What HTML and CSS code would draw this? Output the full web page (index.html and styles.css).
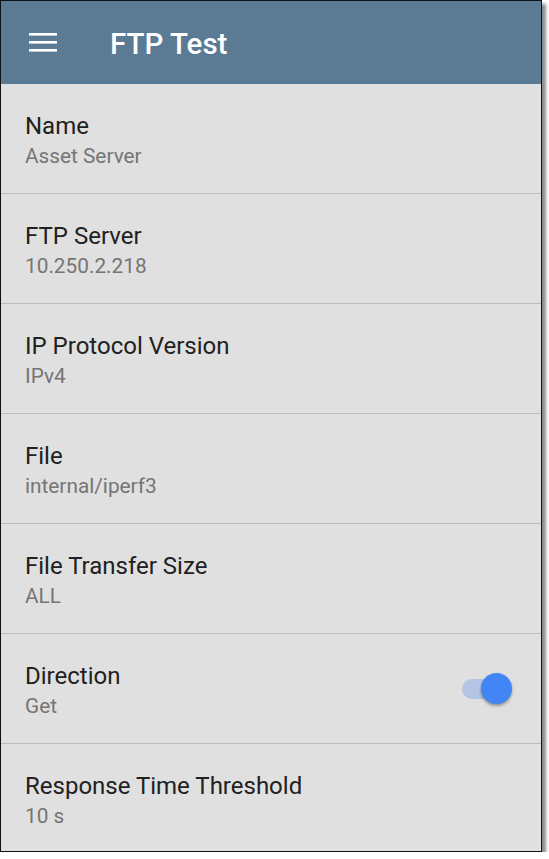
FILE: index.html
```html
<!DOCTYPE html>
<html lang="en">
<head>
    <meta charset="UTF-8">
    <title>FTP Test</title>
    <link rel="stylesheet" href="styles.css">
</head>
<body>
    <div class="screen">
        <div class="toolbar">
            <svg class="menu" width="28" height="19" viewBox="0 0 28 19">
                <rect x="0" y="0" width="28" height="2.6" fill="#fff"/>
                <rect x="0" y="8" width="28" height="2.6" fill="#fff"/>
                <rect x="0" y="16" width="28" height="2.6" fill="#fff"/>
            </svg>
            <h1>FTP Test</h1>
        </div>

        <div class="row">
            <div class="text">
                <div class="title">Name</div>
                <div class="value">Asset Server</div>
            </div>
        </div>
        <div class="row">
            <div class="text">
                <div class="title">FTP Server</div>
                <div class="value">10.250.2.218</div>
            </div>
        </div>
        <div class="row">
            <div class="text">
                <div class="title">IP Protocol Version</div>
                <div class="value">IPv4</div>
            </div>
        </div>
        <div class="row">
            <div class="text">
                <div class="title">File</div>
                <div class="value">internal/iperf3</div>
            </div>
        </div>
        <div class="row">
            <div class="text">
                <div class="title">File Transfer Size</div>
                <div class="value">ALL</div>
            </div>
        </div>
        <div class="row">
            <div class="text">
                <div class="title">Direction</div>
                <div class="value">Get</div>
            </div>
            <div class="switch">
                <span class="track"></span>
                <span class="thumb"></span>
            </div>
        </div>
        <div class="row last">
            <div class="text">
                <div class="title">Response Time Threshold</div>
                <div class="value">10 s</div>
            </div>
        </div>
    </div>
</body>
</html>
```

FILE: styles.css
```css
body {
    margin: 0;
    background-color: #fff;
    font-family: Roboto, "Liberation Sans", sans-serif;
}

.screen {
    width: 540px;
    border: 1px solid #111;
    background-color: #e0e0e0;
    box-shadow: 4px 4px 3px rgba(0, 0, 0, 0.45);
}

.toolbar {
    height: 83px;
    background-color: #5b7a93;
    display: flex;
    align-items: center;
    padding-left: 28px;
}

.menu {
    display: block;
}

.toolbar h1 {
    margin: 2px 0 0 53px;
    color: #fff;
    font-size: 29.5px;
    font-weight: 500;
}

.row {
    box-sizing: border-box;
    height: 110px;
    border-bottom: 1px solid #bdbdbd;
    display: flex;
    align-items: flex-start;
    justify-content: space-between;
    padding: 27px 29px 0 24px;
}

.row.last {
    height: 107px;
    border-bottom: none;
}

.title {
    font-size: 24px;
    color: #212121;
    line-height: 30px;
}

.value {
    margin-top: 1px;
    font-size: 20.8px;
    color: #757575;
    line-height: 28px;
}

.switch {
    position: relative;
    align-self: center;
    margin-top: -27px;
    width: 50px;
    height: 32px;
}

.track {
    position: absolute;
    left: 0;
    top: 6px;
    width: 38px;
    height: 20px;
    border-radius: 10px;
    background-color: #b3c5e3;
}

.thumb {
    position: absolute;
    right: 0;
    top: 0;
    width: 31px;
    height: 31px;
    border-radius: 50%;
    background-color: #4285f4;
    box-shadow: 0 2px 3px rgba(0, 0, 0, 0.35);
}
```
